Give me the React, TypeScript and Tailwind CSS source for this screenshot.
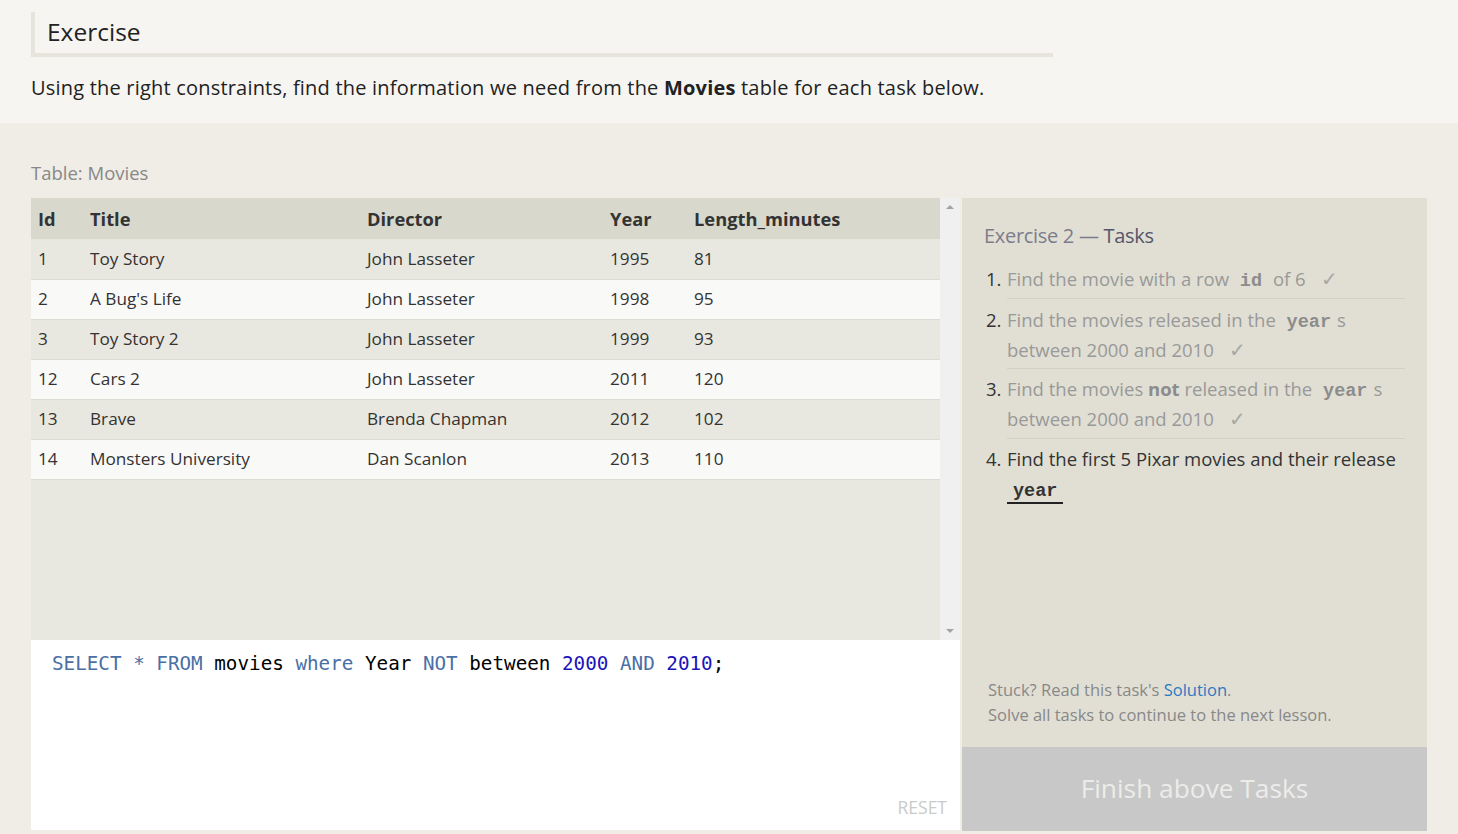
import React from "react";

const movies = [
  { id: 1, title: "Toy Story", director: "John Lasseter", year: 1995, length: 81 },
  { id: 2, title: "A Bug's Life", director: "John Lasseter", year: 1998, length: 95 },
  { id: 3, title: "Toy Story 2", director: "John Lasseter", year: 1999, length: 93 },
  { id: 12, title: "Cars 2", director: "John Lasseter", year: 2011, length: 120 },
  { id: 13, title: "Brave", director: "Brenda Chapman", year: 2012, length: 102 },
  { id: 14, title: "Monsters University", director: "Dan Scanlon", year: 2013, length: 110 },
];

const Code = ({ children }: { children: React.ReactNode }) => (
  <code className="font-['Liberation_Mono',monospace] font-bold text-[18.5px] leading-none px-[6px] text-[#8c8c8c]">{children}</code>
);

const Check = () => <span className="ml-[15px] text-[20px] leading-none text-[#a8a8a8]">✓</span>;

export default function App() {
  return (
    <div className="min-h-screen bg-[#efede6] font-['Open_Sans',sans-serif] text-[#333]">
      {/* Intro */}
      <div className="bg-[#f6f5f1] pt-[12px] pb-[20px] px-[31px]">
        <div className="w-[1022px] border-l-[4px] border-b-[4px] border-[#e6e4dc] pl-[12px] pt-[4px] pb-[5px]">
          <h2 className="text-[24.5px] leading-[32px] text-[#222]">Exercise</h2>
        </div>
        <p className="mt-[16px] text-[20px] leading-[30px] text-[#222] tracking-[0.2px]">
          Using the right constraints, find the information we need from the <b>Movies</b> table for each task below.
        </p>
      </div>

      {/* Workspace */}
      <div className="px-[31px] pt-[38px]">
        <div className="text-[18.5px] leading-[24px] text-[#888] mb-[13px]">Table: Movies</div>
        <div className="flex">
          {/* Left column */}
          <div className="w-[929px] flex flex-col">
            <div className="flex h-[442px] bg-[#e9e8e0]">
              <div className="flex-1 overflow-hidden">
                <table className="w-full border-collapse text-left text-[17.2px]">
                  <thead>
                    <tr className="bg-[#d9d8cc] h-[41px]">
                      <th className="pl-[7px] w-[59px] font-bold text-[18.3px]">Id</th>
                      <th className="w-[277px] font-bold text-[18.3px]">Title</th>
                      <th className="w-[243px] font-bold text-[18.3px]">Director</th>
                      <th className="w-[84px] font-bold text-[18.3px]">Year</th>
                      <th className="font-bold text-[18.3px]">Length_minutes</th>
                    </tr>
                  </thead>
                  <tbody>
                    {movies.map((m, i) => (
                      <tr
                        key={m.id}
                        className={`h-[40px] border-b border-[#dddcd4] ${i % 2 === 0 ? "bg-[#e9e8e0]" : "bg-[#f9f9f8]"}`}
                      >
                        <td className="pl-[7px]">{m.id}</td>
                        <td>{m.title}</td>
                        <td>{m.director}</td>
                        <td>{m.year}</td>
                        <td>{m.length}</td>
                      </tr>
                    ))}
                  </tbody>
                </table>
              </div>
              {/* Scrollbar */}
              <div className="w-[20px] bg-[#f0f0f0] flex flex-col items-center justify-between py-[7px]">
                <div className="w-0 h-0 border-l-[4px] border-r-[4px] border-b-[4px] border-l-transparent border-r-transparent border-b-[#a3a3a3]" />
                <div className="w-0 h-0 border-l-[4px] border-r-[4px] border-t-[4px] border-l-transparent border-r-transparent border-t-[#a3a3a3]" />
              </div>
            </div>

            {/* Editor */}
            <div className="relative h-[190px] bg-white px-[21px] pt-[11px]">
              <pre className="font-['DejaVu_Sans_Mono',monospace] text-[19.25px] leading-[26px] text-black">
                <span className="text-[#4a6fa5]">SELECT</span> <span className="text-[#4a6fa5]">*</span>{" "}
                <span className="text-[#4a6fa5]">FROM</span> movies <span className="text-[#4a6fa5]">where</span> Year{" "}
                <span className="text-[#4a6fa5]">NOT</span> between <span className="text-[#1c14b8]">2000</span>{" "}
                <span className="text-[#4a6fa5]">AND</span> <span className="text-[#1c14b8]">2010</span>;
              </pre>
              <div className="absolute right-[13px] bottom-[10px] text-[17.5px] text-[#c9cbc7]">RESET</div>
            </div>
          </div>

          {/* Right panel */}
          <div className="ml-[2px] w-[465px] h-[633px] bg-[#e1dfd4] flex flex-col">
            <div className="flex-1 px-[22px] pt-[24px] flex flex-col">
              <h3 className="text-[20px] leading-[28px] tracking-[-0.3px] text-[#7c7c8a]">
                Exercise 2 — <span className="text-[#55566b]">Tasks</span>
              </h3>
              <ol className="mt-[14px] text-[18.5px] leading-[30px]">
                <li className="flex">
                  <span className="w-[23px] shrink-0 text-[#333] pl-[2px]">1.</span>
                  <div className="flex-1 border-b border-[#d3d1c6] pb-[4px] text-[#999]">
                    Find the movie with a row <Code>id</Code> of 6<Check />
                  </div>
                </li>
                <li className="flex pt-[6px]">
                  <span className="w-[23px] shrink-0 text-[#333] pl-[2px]">2.</span>
                  <div className="flex-1 border-b border-[#d3d1c6] pb-[3px] text-[#999]">
                    Find the movies released in the <Code>year</Code>s between 2000 and 2010<Check />
                  </div>
                </li>
                <li className="flex pt-[5px]">
                  <span className="w-[23px] shrink-0 text-[#333] pl-[2px]">3.</span>
                  <div className="flex-1 border-b border-[#d3d1c6] pb-[4px] text-[#999]">
                    Find the movies <b className="text-[#8c8c8c]">not</b> released in the <Code>year</Code>s between 2000 and 2010<Check />
                  </div>
                </li>
                <li className="flex pt-[5px]">
                  <span className="w-[23px] shrink-0 text-[#333] pl-[2px]">4.</span>
                  <div className="flex-1 text-[#333]">
                    Find the first 5 Pixar movies and their release{" "}
                    <code className="font-['Liberation_Mono',monospace] font-bold text-[18.5px] leading-none px-[6px] border-b-2 border-[#222] text-[#333]">year</code>
                  </div>
                </li>
              </ol>
              <div className="mt-auto pl-[4px] pb-[20px] text-[16.5px] leading-[25px] text-[#888]">
                <div>
                  Stuck? Read this task's <span className="text-[#2b7ac2]">Solution</span>.
                </div>
                <div>Solve all tasks to continue to the next lesson.</div>
              </div>
            </div>
            <div className="h-[84px] bg-[#c8c8c8] flex items-center justify-center text-[26.3px] text-[#ececea]">
              Finish above Tasks
            </div>
          </div>
        </div>
      </div>
    </div>
  );
}
